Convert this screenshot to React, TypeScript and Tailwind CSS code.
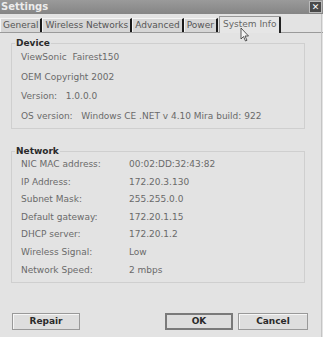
import React from "react";

const deviceRows = [
  "ViewSonic  Fairest150",
  "OEM Copyright 2002",
  "Version:   1.0.0.0",
  "OS version:   Windows CE .NET v 4.10 Mira build: 922",
];

const networkRows: [string, string][] = [
  ["NIC MAC address:", "00:02:DD:32:43:82"],
  ["IP Address:", "172.20.3.130"],
  ["Subnet Mask:", "255.255.0.0"],
  ["Default gateway:", "172.20.1.15"],
  ["DHCP server:", "172.20.1.2"],
  ["Wireless Signal:", "Low"],
  ["Network Speed:", "2 mbps"],
];

const tabs = ["General", "Wireless Networks", "Advanced", "Power"];

export default function App() {
  return (
    <div
      className="relative w-[323px] h-[337px] bg-[#e3e3e3] overflow-hidden text-[#6a6a6a] whitespace-pre"
      style={{ fontFamily: '"DejaVu Sans", Verdana, sans-serif' }}
    >
      {/* Title bar */}
      <div className="h-[14px] bg-gradient-to-b from-[#9a9a9a] to-[#858585] flex items-center justify-between pl-[1px] pr-[1px]">
        <span className="text-[10px] font-bold text-[#ececec] leading-none">Settings</span>
        <div className="w-[13px] h-[12px] bg-[#4a4a4a] border border-[#bbb] flex items-center justify-center text-white text-[9px] font-bold leading-none">
          ✕
        </div>
      </div>

      {/* Tabs */}
      <div className="mt-[3px] flex items-end h-[16px] border-b border-[#9a9a9a]">
        {tabs.map((t) => (
          <div
            key={t}
            className="h-[14px] px-[2px] bg-[#d6d6d6] border-t border-l border-[#f4f4f4] border-r-2 border-r-[#1a1a1a] flex items-center text-[9px] text-[#555] leading-none"
          >
            {t}
          </div>
        ))}
        <div className="h-[17px] px-[3px] -mb-[1px] ml-[1px] bg-[#e6e6e6] border-t border-l border-[#999] border-r-2 border-r-[#222] rounded-tr-[2px] flex items-start pt-[3px] text-[9px] text-[#666] leading-none">
          System Info
        </div>
      </div>

      {/* Device */}
      <fieldset className="mx-[11px] mt-[6px] w-[294px] h-[90px] border border-[#cfcfcf] pl-[9px] pt-[4px]">
        <legend className="-ml-[6px] px-[1px] text-[9px] font-bold text-[#2a2a2a] leading-none">Device</legend>
        <div className="flex flex-col gap-[9.5px] text-[9px] leading-[10px]">
          {deviceRows.map((r) => (
            <div key={r}>{r}</div>
          ))}
        </div>
      </fieldset>

      {/* Network */}
      <fieldset className="mx-[11px] mt-[18px] w-[294px] h-[136px] border border-[#cfcfcf] pl-[9px] pt-[3px]">
        <legend className="-ml-[6px] px-[1px] text-[9px] font-bold text-[#2a2a2a] leading-none">Network</legend>
        <div className="flex flex-col gap-[7.6px] text-[9px] leading-[10px]">
          {networkRows.map(([k, v]) => (
            <div key={k} className="flex">
              <span className="w-[108px]">{k}</span>
              <span>{v}</span>
            </div>
          ))}
        </div>
      </fieldset>

      {/* Buttons */}
      <div className="flex mt-[30px] pl-[12px] text-[9px] font-bold text-[#2a2a2a]">
        <button className="w-[68px] h-[17px] bg-[#dedede] border border-[#999] shadow-[inset_1px_1px_0_#f6f6f6] leading-none">
          Repair
        </button>
        <button className="ml-[85px] w-[68px] h-[17px] bg-[#dedede] border-2 border-[#7a7a7a] leading-none">
          OK
        </button>
        <button className="ml-[5px] w-[70px] h-[17px] bg-[#dedede] border border-[#999] shadow-[inset_1px_1px_0_#f6f6f6] leading-none">
          Cancel
        </button>
      </div>

      {/* window right edge */}
      <div className="absolute top-[14px] right-[1px] w-[1px] h-[323px] bg-[#c4c4c4]" />

      {/* mouse cursor */}
      <svg className="absolute left-[240px] top-[27px]" width="10" height="15" viewBox="0 0 10 15">
        <path d="M1 1 L1 12 L3.5 9.5 L5.5 14 L7 13.3 L5 9 L8.5 9 Z" fill="#f4f4f4" stroke="#333" strokeWidth="0.8" />
      </svg>
    </div>
  );
}
